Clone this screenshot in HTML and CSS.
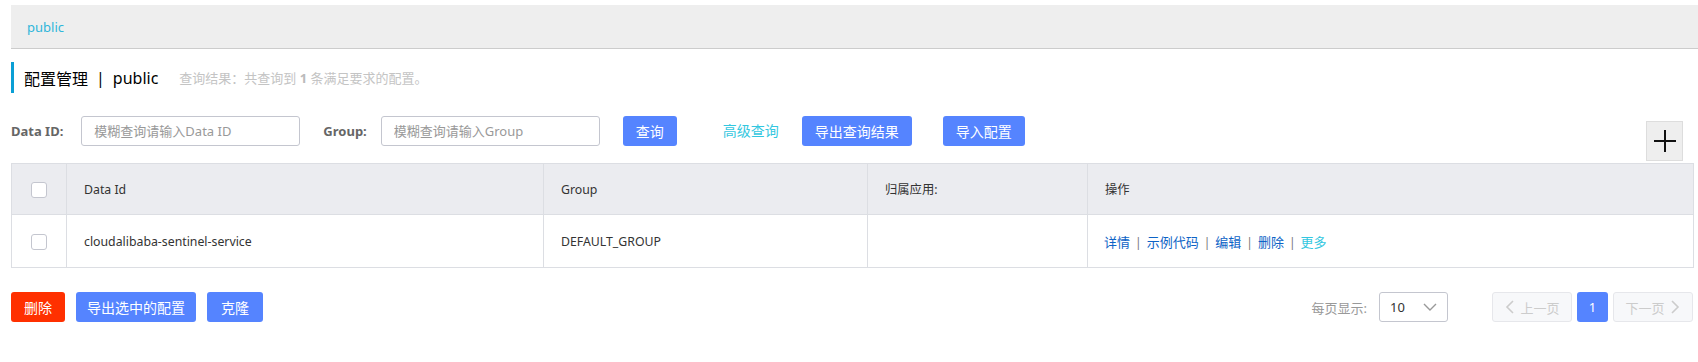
FILE: index.html
```html
<!DOCTYPE html>
<html lang="zh-CN">
<head>
    <meta charset="UTF-8">
    <meta name="viewport" content="width=device-width, initial-scale=1.0">
    <title>配置管理</title>
    <link rel="stylesheet" href="styles.css">
</head>
<body>

<div class="page">

    <!-- namespace bar -->
    <div class="ns-bar">
        <a class="ns-link" href="#">public</a>
    </div>

    <!-- page title -->
    <div class="page-title">
        <span class="title-main">配置管理</span>
        <span class="title-sep">|</span>
        <span class="title-main">public</span>
        <span class="title-result">查询结果：共查询到 <b>1</b> 条满足要求的配置。</span>
    </div>

    <!-- search form -->
    <div class="search-row">
        <label class="form-label" for="dataId">Data ID:</label>
        <input class="form-input" type="text" id="dataId" placeholder="模糊查询请输入Data ID">
        <label class="form-label group-label" for="group">Group:</label>
        <input class="form-input" type="text" id="group" placeholder="模糊查询请输入Group">
        <button class="btn btn-primary btn-query">查询</button>
        <a class="adv-link" href="#">高级查询</a>
        <button class="btn btn-primary btn-export">导出查询结果</button>
        <button class="btn btn-primary btn-import">导入配置</button>
        <button class="btn-add" title="新建配置">
            <svg width="24" height="24" viewBox="0 0 24 24"><path d="M12 1v22M1 12h22" stroke="#111" stroke-width="2" fill="none"/></svg>
        </button>
    </div>

    <!-- config table -->
    <table class="config-table">
        <thead>
            <tr>
                <th class="col-check"><span class="checkbox"></span></th>
                <th class="col-id">Data Id</th>
                <th class="col-group">Group</th>
                <th class="col-app">归属应用:</th>
                <th>操作</th>
            </tr>
        </thead>
        <tbody>
            <tr>
                <td class="col-check"><span class="checkbox"></span></td>
                <td>cloudalibaba-sentinel-service</td>
                <td>DEFAULT_GROUP</td>
                <td></td>
                <td class="actions">
                    <a href="#">详情</a><span class="sep">|</span><a href="#">示例代码</a><span class="sep">|</span><a href="#">编辑</a><span class="sep">|</span><a href="#">删除</a><span class="sep">|</span><a class="more" href="#">更多</a>
                </td>
            </tr>
        </tbody>
    </table>

    <!-- footer: batch actions + pagination -->
    <div class="footer-row">
        <button class="btn btn-danger">删除</button>
        <button class="btn btn-primary btn-export-sel">导出选中的配置</button>
        <button class="btn btn-primary btn-clone">克隆</button>

        <div class="pager">
            <span class="page-size-label">每页显示:</span>
            <div class="page-select">
                <span>10</span>
                <svg width="14" height="14" viewBox="0 0 14 14"><path d="M1 4l6 6 6-6" stroke="#999" stroke-width="1.4" fill="none"/></svg>
            </div>
            <button class="page-btn page-prev" disabled>
                <svg width="12" height="14" viewBox="0 0 12 14"><path d="M9 1L3 7l6 6" stroke="#ccc" stroke-width="1.6" fill="none"/></svg>
                上一页
            </button>
            <button class="page-btn page-current">1</button>
            <button class="page-btn page-next" disabled>
                下一页
                <svg width="12" height="14" viewBox="0 0 12 14"><path d="M3 1l6 6-6 6" stroke="#ccc" stroke-width="1.6" fill="none"/></svg>
            </button>
        </div>
    </div>

</div>

</body>
</html>
```

FILE: styles.css
```css
body { margin: 0; font-family: "Noto Sans", "Noto Sans CJK SC", sans-serif; font-size: 12px; color: #333; background: #fff; }
a { text-decoration: none; }

.page { padding: 5px 4px 0 11px; }

.ns-bar { height: 43px; margin-right: -4px; padding-left: 16px; background-color: #eee; border-bottom: 1px solid #ccc; display: flex; align-items: center; }
.ns-link { font-size: 13px; color: #2fb6da; }

.page-title { margin-top: 13px; height: 31px; border-left: 3px solid #0a9fd5; padding-left: 10px; display: flex; align-items: center; font-size: 16px; color: #000; }
.title-sep { margin: 0 8px; }
.title-result { margin-left: 21px; font-size: 13px; color: #c4c4c4; }
.title-result b { color: #bbb; }

.search-row { margin-top: 23px; display: flex; align-items: flex-start; }
.form-label { height: 30px; line-height: 30px; font-size: 13px; font-weight: bold; color: #666; margin-right: 18px; }
.group-label { margin-left: 23px; margin-right: 14px; }
.form-input { width: 219px; height: 30px; box-sizing: border-box; padding: 0 12px; border: 1px solid #c4c6cf; border-radius: 3px; font-family: inherit; font-size: 13px; color: #333; outline: none; }
.form-input::placeholder { color: #999; }

.btn { height: 30px; padding: 0 13px; border: none; border-radius: 3px; font-family: inherit; font-size: 14px; color: #fff; cursor: pointer; }
.btn-primary { background-color: #5584ff; }
.btn-danger { background-color: #ff3000; }
.btn-query { margin-left: 23px; }
.adv-link { height: 30px; line-height: 30px; margin-left: 46px; font-size: 14px; color: #33c7e0; }
.btn-export { margin-left: 23px; }
.btn-import { margin-left: 31px; }
.btn-add { margin: 5px 11px 0 auto; width: 37px; height: 40px; padding: 0; background-color: #eee; border: 1px solid #ddd; display: flex; align-items: center; justify-content: center; cursor: pointer; }

.config-table { margin-top: 2px; width: 100%; border-collapse: collapse; table-layout: fixed; font-size: 12.3px; }
.config-table th, .config-table td { box-sizing: border-box; border: 1px solid #dcdee3; padding: 0 17px; text-align: left; font-weight: normal; color: #333; }
.config-table th { height: 51px; background-color: #ebecf0; }
.config-table td { height: 53px; }
.config-table .col-check { width: 55px; padding: 0; text-align: center; }
.config-table .col-id { width: 477px; }
.config-table .col-group { width: 324px; }
.config-table .col-app { width: 220px; }
.checkbox { display: inline-block; width: 14px; height: 14px; border: 1px solid #c4c6cf; border-radius: 3px; background: #fff; vertical-align: middle; }

.config-table .actions { font-size: 13px; padding-left: 16px; }
.actions a { color: #0d63c6; }
.actions a.more { color: #33c7e0; }
.actions .sep { margin: 0 5px; color: #777; font-size: 12px; }

.footer-row { margin-top: 24px; display: flex; align-items: center; }
.footer-row .btn { margin-right: 11px; }
.footer-row .btn-export-sel { padding: 0 11px; }
.footer-row .btn-clone { padding: 0 14px; }
.pager { margin-left: auto; margin-right: 1px; display: flex; align-items: center; }
.page-size-label { font-size: 13px; color: #999; margin-right: 12px; }
.page-select { width: 69px; height: 30px; box-sizing: border-box; border: 1px solid #c4c6cf; border-radius: 3px; padding: 0 10px; display: flex; align-items: center; justify-content: space-between; font-size: 13px; color: #333; }
.page-btn { height: 30px; box-sizing: border-box; border-radius: 3px; font-family: inherit; font-size: 13px; display: flex; align-items: center; justify-content: center; gap: 4px; }
.page-prev, .page-next { width: 80px; background-color: #f7f8fa; border: 1px solid #e6e7eb; color: #ccc; }
.page-prev { margin-left: 44px; }
.page-current { width: 31px; margin: 0 5px; background-color: #5584ff; border: none; color: #fff; }
```
